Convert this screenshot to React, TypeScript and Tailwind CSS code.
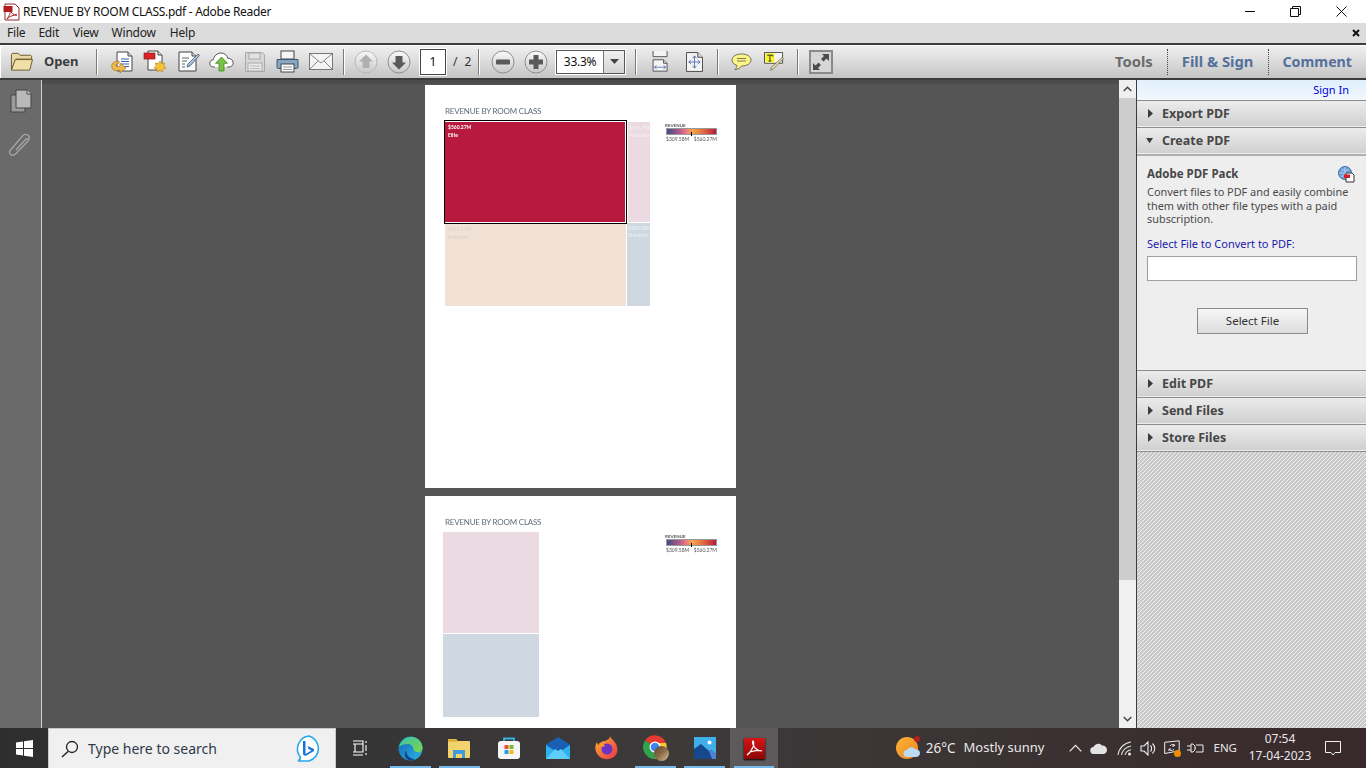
import React from "react";

const FONT = "font-['Noto_Sans','Open_Sans',sans-serif]";

function TbSep() {
  return <div className="w-[2px] h-[26px] bg-[#7a7a7a] border-r border-white" />;
}

function Slot({ w = "w-[33px]", children }: { w?: string; children: React.ReactNode }) {
  return <div className={`${w} h-[24px] flex items-center justify-center shrink-0`}>{children}</div>;
}

const PdfMini = () => (
  <svg width="18" height="18" viewBox="0 0 18 18">
    <path d="M2 1h10l4 4v12H2z" fill="#fff" stroke="#8a2a2a" />
    <rect x="0.5" y="3" width="9" height="6" fill="#b51d1d" />
    <path d="M4 16c2-3 4-6 3-9 1 3 3 5 7 5-4 0-7 1-10 4z" fill="none" stroke="#b51d1d" />
  </svg>
);

const Folder = () => (
  <svg width="25" height="21" viewBox="0 0 25 21">
    <path d="M1.5 19V3.5l1-1.5h6l2 2h11l1 1v3H6z" fill="#e9d9a4" stroke="#6b5a30" />
    <path d="M1.5 19.5h19l3-11h-18z" fill="#f0dfa6" stroke="#6b5a30" />
  </svg>
);

const DocArrow = () => (
  <svg width="24" height="24" viewBox="0 0 24 24">
    <path d="M7 2h11l4 4v15H7z" fill="#fff" stroke="#444" />
    <path d="M18 2v4h4" fill="#ddd" stroke="#444" />
    <path d="M11 9h8M11 11.5h8M11 14h8M11 16.5h8" stroke="#3560b0" />
    <path d="M9 11c-6 0-8 3-7 7 1 3 5 3 8 2v3l6-5-6-5v3c-2 1-4 1-4-1 0-1 1-2 3-2z" fill="#efb94d" stroke="#a9741d" strokeWidth=".7" />
  </svg>
);

const DocStar = () => (
  <svg width="24" height="25" viewBox="0 0 24 25">
    <path d="M5 2h10l4 4v15H5z" fill="#fff" stroke="#444" />
    <path d="M15 2v4h4" fill="#ddd" stroke="#444" />
    <rect x="1" y="4" width="11" height="6" fill="#d8242a" stroke="#8d1518" strokeWidth=".7" />
    <path d="M17 12l1.6 2.6 3-.6-.7 3 2.1 2-2.9 1-.6 3-2.5-1.7-2.6 1.7-.5-3-2.9-1 2.1-2-.7-3 3 .6z" fill="#f5c23b" stroke="#b67d12" strokeWidth=".6" />
  </svg>
);

const DocPen = () => (
  <svg width="23" height="23" viewBox="0 0 23 23">
    <path d="M2 2h13l4 4v15H2z" fill="#fbfbfb" stroke="#444" />
    <path d="M15 2v4h4" fill="#ddd" stroke="#444" />
    <path d="M5 8h7M5 11h5M5 14h3M5 17h3" stroke="#666" />
    <path d="M21 4l1.500 1.500L13 16l-3 1 1-3z" fill="#a9c0de" stroke="#44546c" strokeWidth=".8" />
  </svg>
);

const CloudUp = () => (
  <svg width="25" height="20" viewBox="0 0 25 20">
    <path d="M6 15H4.500C2 15 .8 13 .8 11.300c0-2 1.500-3.500 3.500-3.500C5 4 8 1 12 1c3.500 0 6 2.300 6.800 5.300 2.800 0 5.400 1.700 5.400 4.700 0 2.400-2 4-4.200 4H18" fill="#fff" stroke="#555" />
    <path d="M12.500 5l6 6.300h-3.500V19H10v-7.700H6.500z" fill="#7cc146" stroke="#3f8a1f" strokeWidth=".8" />
  </svg>
);

const Save = () => (
  <svg width="20" height="20" viewBox="0 0 20 20">
    <path d="M.5.500h17l2 2v17H.5z" fill="#d7d7d7" stroke="#a8a8a8" />
    <rect x="4" y="1" width="11" height="6" fill="#e3e3e3" stroke="#aaa" />
    <rect x="3" y="11" width="14" height="8" fill="#e9e9e9" stroke="#aaa" />
    <path d="M5 14h10M5 16.500h10" stroke="#bbb" />
  </svg>
);

const Printer = () => (
  <svg width="23" height="23" viewBox="0 0 23 23">
    <rect x="5" y="1" width="13" height="8" fill="#f6f6f6" stroke="#444" />
    <path d="M1 9.500h21v7.500a1.500 1.500 0 0 1-1.500 1.500h-18A1.500 1.500 0 0 1 1 17z" fill="#86a7c4" stroke="#40566a" />
    <rect x="5" y="14" width="13" height="8" fill="#fbfbfb" stroke="#444" />
    <path d="M7 17h9M7 19.500h9" stroke="#999" />
  </svg>
);

const Mail = () => (
  <svg width="24" height="17" viewBox="0 0 24 17">
    <rect x=".5" y=".5" width="23" height="16" fill="#f4f4f4" stroke="#777" />
    <path d="M1 1l11 9 11-9M1 16l8-8M23 16l-8-8" fill="none" stroke="#888" />
  </svg>
);

const RoundBtn = ({ kind }: { kind: "up" | "down" | "minus" | "plus" }) => {
  const dim = kind === "up";
  const color = dim ? "#b0b0b0" : "#5a5a5a";
  return (
    <svg width="24" height="24" viewBox="0 0 24 24">
      <defs>
        <linearGradient id={`rb-${kind}`} x1="0" y1="0" x2="0" y2="1">
          <stop offset="0" stopColor="#fafafa" />
          <stop offset="1" stopColor="#c8c8c8" />
        </linearGradient>
      </defs>
      <circle cx="12" cy="12" r="11" fill={`url(#rb-${kind})`} stroke={dim ? "#b8b8b8" : "#8f8f8f"} />
      {kind === "up" && <path d="M12 4.500l7 7h-3.500v6.500h-7v-6.500H5z" fill={color} />}
      {kind === "down" && <path d="M12 19.500l7-7h-3.500V6h-7v6.500H5z" fill={color} />}
      {kind === "minus" && <rect x="5" y="9.500" width="14" height="5" rx="1" fill={color} />}
      {kind === "plus" && <path d="M9.500 5h5v4.500H19v5h-4.500V19h-5v-4.500H5v-5h4.500z" fill={color} />}
    </svg>
  );
};

const FitWidth = () => (
  <svg width="17" height="21" viewBox="0 0 18 24">
    <path d="M.5 0v6.500h16V0" fill="#f4f4f4" stroke="#444" />
    <path d="M.5 23v-13h12l4 4v9z" fill="#f4f4f4" stroke="#444" />
    <path d="M12.500 10v4h4" fill="#ddd" stroke="#444" />
    <path d="M2 18.500h13M2 18.500l2.500-2M2 18.500l2.500 2M15 18.500l-2.500-2M15 18.500l-2.500 2" stroke="#5a76b6" fill="none" />
  </svg>
);

const FitPage = () => (
  <svg width="17" height="20" viewBox="0 0 18 21">
    <path d="M.5.500h12l5 5v15H.5z" fill="#f4f4f4" stroke="#444" />
    <path d="M12.500.500v5h5" fill="#ddd" stroke="#444" />
    <path d="M9 4v13M3 10.500h12M9 4L7 6.500M9 4l2 2.500M9 17l-2-2.500M9 17l2-2.500M3 10.500l2.500-2M3 10.500l2.500 2M15 10.500l-2.500-2M15 10.500l-2.500 2" stroke="#5a76b6" fill="none" />
  </svg>
);

const Bubble = () => (
  <svg width="21" height="18" viewBox="0 0 21 18">
    <path d="M10.500 1C5 1 1 3.500 1 7c0 2.500 2 4.500 5 5.500 0 1.500-1 3-2 4 3 0 5-1.500 6.500-3.500 5.500 0 9.500-2.500 9.500-6 0-3.500-4-6-9.500-6z" fill="#fbf58a" stroke="#6e6e52" />
    <path d="M6 5.500h9M6 8h9" stroke="#7a7a50" />
  </svg>
);

const TextNote = () => (
  <svg width="20" height="19" viewBox="0 0 22 21">
    <path d="M.5.500h20v12H.5z" fill="#f4f4f4" stroke="#444" />
    <rect x="1.500" y="1.500" width="10" height="10" fill="#f7f22a" />
    <path d="M3.500 3.500h6v1.500M6.500 3.500v6.500M5 10h3" stroke="#222" fill="none" />
    <path d="M20 6l1.500 1.500L10 19l-3 1.200L8 17z" fill="#e8d79a" stroke="#666" strokeWidth=".8" />
  </svg>
);

const Expand = () => (
  <div className="w-[24px] h-[24px] border-2 border-[#8a8a8a] bg-[#d6d6d6] flex items-center justify-center">
    <svg width="18" height="18" viewBox="0 0 18 18">
      <path d="M10 1h7v7l-2.500-2.500-3 3-2.500-2.500 3-3zM8 17H1v-7l2.500 2.500 3-3 2.500 2.500-3 3z" fill="#4d4d4d" />
    </svg>
  </div>
);

function PanelHeader({ label, open = false }: { label: string; open?: boolean }) {
  return (
    <div className="h-[26px] mb-px flex items-center bg-gradient-to-b from-[#ececec] to-[#d0d0d0] border-t border-[#8c8c8c] shrink-0">
      <div className="w-[25px] flex justify-end pr-[8px]">
        {open ? (
          <svg width="8" height="6" viewBox="0 0 9 7"><path d="M0 0h8L4 6z" fill="#3b3b3b" /></svg>
        ) : (
          <svg width="7" height="9" viewBox="0 0 7 9"><path d="M1 0l5 4.500L1 9z" fill="#3b3b3b" /></svg>
        )}
      </div>
      <span className="pt-[2px] text-[12.500px] font-bold text-[#474747]">{label}</span>
    </div>
  );
}

function Legend({ mt }: { mt: string }) {
  return (
    <div className={`${mt} w-[52px] shrink-0`}>
      <div className="text-[4.500px] leading-[5px] font-bold text-[#555] h-[5px] blur-[0.2px]">REVENUE</div>
      <div className="relative h-[7px] w-[51px] ml-px border border-[#999] bg-[linear-gradient(90deg,#3e4d86,#b05a8c_25%,#f27a80_40%,#f4a84c_52%,#e0683f_75%,#b6193f)]">
        <div className="absolute left-[24px] top-[3px] h-[4px] w-px bg-black" />
      </div>
      <div className="flex justify-between ml-px w-[51px] text-[5px] leading-[7px] mt-[1px] text-[#555] blur-[0.2px]">
        <span>$309.58M</span>
        <span>$560.27M</span>
      </div>
    </div>
  );
}

function Page1() {
  return (
    <div className="w-[311px] h-[403px] bg-white shrink-0 px-[20px] pt-[21px] font-['Lato','Liberation_Sans',sans-serif]">
      <div className="text-[8px] leading-[10px] tracking-[-0.22px] text-[#5f6b78] h-[15px] whitespace-nowrap blur-[0.2px]">REVENUE BY ROOM CLASS</div>
      <div className="flex">
        <div className="w-[205px] h-[185px] flex shrink-0">
          <div className="w-[181px] flex flex-col shrink-0">
            <div className="h-[102px] mb-px outline outline-1 outline-black border-y border-r border-white bg-[#b7193f] text-white text-[5px] leading-[7.500px] font-bold pl-[3px] pt-[2px]">
              <div className="blur-[0.2px]">$560.27M</div>
              <div className="blur-[0.2px]">Elite</div>
            </div>
            <div className="flex-1 bg-[#f2e1d5] text-[#d9d2cb] text-[5px] leading-[7.500px] pl-[3px] pt-[2px]">
              <div className="blur-[0.2px]">$462.17M</div>
              <div className="blur-[0.2px]">Premium</div>
            </div>
          </div>
          <div className="flex-1 flex flex-col overflow-hidden">
            <div className="h-[100px] mt-px ml-[2px] bg-[#ebdae2] text-[#f7eff3] text-[5px] leading-[7px] pl-px pt-[3px] whitespace-nowrap">
              <div className="blur-[0.2px]">$376.75M</div>
              <div className="blur-[0.2px]">Presidential</div>
            </div>
            <div className="flex-1 ml-px bg-[#cfd8e0] text-[#eef1f4] text-[5px] leading-[7px] pl-px pt-[2px] whitespace-nowrap border-t border-white">
              <div className="blur-[0.2px]">$309.58M</div>
              <div className="blur-[0.2px]">Standard</div>
            </div>
          </div>
        </div>
        <Legend mt="mt-[2px] ml-[15px]" />
      </div>
    </div>
  );
}

function Page2() {
  return (
    <div className="w-[311px] h-[403px] bg-white shrink-0 pl-[18px] pt-[21px] font-['Lato','Liberation_Sans',sans-serif]">
      <div className="text-[8px] leading-[10px] tracking-[-0.22px] text-[#5f6b78] h-[15px] pl-[2px] whitespace-nowrap blur-[0.2px]">REVENUE BY ROOM CLASS</div>
      <div className="flex">
        <div className="w-[96px] flex flex-col shrink-0">
          <div className="h-[101px] bg-[#ebdae2]" />
          <div className="h-[83px] mt-px bg-[#cfd8e0]" />
        </div>
        <Legend mt="mt-[2px] ml-[126px]" />
      </div>
    </div>
  );
}

const Grad = ({ id, stops }: { id: string; stops: [string, string][] }) => (
  <linearGradient id={id} x1="0" y1="0" x2="1" y2="1">
    {stops.map(([o, c]) => <stop key={o} offset={o} stopColor={c} />)}
  </linearGradient>
);

function TbItem({ active = false, on = false, w = "w-[49px]", className = "", children }: { active?: boolean; on?: boolean; w?: string; className?: string; children: React.ReactNode }) {
  return (
    <div className={`${w} ${className} h-full relative flex items-center justify-center shrink-0 ${active ? "bg-[#5e595a]" : ""}`}>
      {children}
      {on && <div className="absolute bottom-0 left-[4px] right-[4px] h-[2px] bg-[#76b9ed]" />}
    </div>
  );
}

export default function App() {
  return (
    <div className={`w-[1366px] h-[768px] overflow-hidden flex flex-col bg-white ${FONT}`}>
      {/* Title bar */}
      <div className="h-[23px] shrink-0 flex items-center bg-white">
        <div className="ml-[2px] w-[19px] flex justify-center"><PdfMini /></div>
        <span className="ml-[2px] text-[12px] tracking-[-0.3px] text-[#111] whitespace-nowrap">REVENUE BY ROOM CLASS.pdf - Adobe Reader</span>
        <div className="ml-auto mr-[2px] flex items-center h-full">
          <div className="w-[45px] flex justify-center"><div className="w-[10px] h-px bg-black" /></div>
          <div className="w-[46px] flex justify-center">
            <svg width="11" height="11" viewBox="0 0 11 11"><path d="M.5 2.500h8v8h-8zM2.500 2.500v-2h8v8h-2" fill="none" stroke="#111" /></svg>
          </div>
          <div className="w-[46px] flex justify-center">
            <svg width="11" height="11" viewBox="0 0 11 11"><path d="M.5.500l10 10M10.500.500l-10 10" stroke="#111" /></svg>
          </div>
        </div>
      </div>

      {/* Menu bar */}
      <div className="h-[20px] shrink-0 bg-[#dcdcdc] flex items-center text-[12px] tracking-[-0.2px] text-[#222]">
        <span className="ml-[7px]">File</span>
        <span className="ml-[13px]">Edit</span>
        <span className="ml-[14px]">View</span>
        <span className="ml-[13px]">Window</span>
        <span className="ml-[14px]">Help</span>
        <svg className="ml-auto mr-[6px]" width="8" height="8" viewBox="0 0 8 8"><path d="M1 1l6 6M7 1L1 7" stroke="#111" strokeWidth="2" /></svg>
      </div>

      {/* Toolbar */}
      <div className="h-[37px] shrink-0 border-y-2 border-y-[#3c3c3c] bg-gradient-to-b from-[#f0f0f0] via-[#dcdcdc] to-[#c4c4c4] flex items-center shadow-[inset_1px_1px_0_#fff]">
        <div className="ml-[10px]"><Slot w="w-[24px]"><Folder /></Slot></div>
        <span className="ml-[10px] w-[33px] text-[13px] tracking-[-0.1px] font-bold text-[#3d3d3d]">Open</span>
        <div className="ml-[19px]"><TbSep /></div>
        <div className="ml-[7px] flex">
          <Slot><DocArrow /></Slot>
          <Slot w="w-[34px]"><DocStar /></Slot>
          <Slot><DocPen /></Slot>
          <Slot><CloudUp /></Slot>
          <Slot><Save /></Slot>
          <Slot><Printer /></Slot>
          <Slot><Mail /></Slot>
        </div>
        <div className="ml-[6px]"><TbSep /></div>
        <div className="ml-[4px] flex">
          <Slot><RoundBtn kind="up" /></Slot>
          <Slot><RoundBtn kind="down" /></Slot>
        </div>
        <div className="ml-[5px] w-[26px] h-[26px] border border-[#444] bg-white outline outline-white flex items-center justify-center text-[12px] text-[#111]">1</div>
        <span className="ml-[7px] w-[25px] text-[12px] text-[#333] tracking-[2px] whitespace-pre">/ 2</span>
        <TbSep />
        <div className="ml-[6px] flex">
          <Slot><RoundBtn kind="minus" /></Slot>
          <Slot><RoundBtn kind="plus" /></Slot>
        </div>
        <div className="ml-[3px] w-[71px] h-[26px] border border-white flex bg-white">
          <div className="w-[48px] border border-[#555] border-r-[#777] flex items-center justify-center text-[12px] tracking-[-0.3px] text-[#111]">33.3%</div>
          <div className="flex-1 bg-gradient-to-b from-[#f0f0f0] to-[#d4d4d4] border-y border-r border-[#555] flex items-center justify-center">
            <svg width="9" height="5" viewBox="0 0 9 5"><path d="M0 0h9L4.500 5z" fill="#444" /></svg>
          </div>
        </div>
        <div className="ml-[9px]"><TbSep /></div>
        <div className="ml-[7px] flex">
          <Slot><FitWidth /></Slot>
          <Slot w="w-[34px]"><FitPage /></Slot>
        </div>
        <div className="ml-[6px]"><TbSep /></div>
        <div className="ml-[6px] flex">
          <Slot><Bubble /></Slot>
          <Slot w="w-[31px]"><TextNote /></Slot>
        </div>
        <div className="ml-[8px]"><TbSep /></div>
        <div className="ml-[10px]"><Expand /></div>
        <div className="ml-auto flex items-center h-full font-bold text-[14.800px]">
          <span className="text-[#6b6b6b]">Tools</span>
          <div className="mx-[14px] h-[26px] border-l border-dotted border-[#444]" />
          <span className="text-[#54709a]">Fill &amp; Sign</span>
          <div className="mx-[14px] h-[26px] border-l border-dotted border-[#444]" />
          <span className="text-[#54709a] text-[14.200px] mr-[14px]">Comment</span>
        </div>
      </div>

      {/* Main */}
      <div className="flex-1 min-h-0 flex">
        <div className="w-[41px] shrink-0 bg-[#6a6a6a] flex flex-col items-center pt-[9px] gap-[20px]">
          <svg width="22" height="24" viewBox="0 0 22 24">
            <path d="M1 6h14v17H1z" fill="#9b9b9b" stroke="#444" />
            <path d="M6 1h11l4 4v14H6z" fill="#b9b9b9" stroke="#444" />
            <path d="M17 1v4h4" fill="#e0e0e0" stroke="#444" />
          </svg>
          <svg className="mr-[3px]" width="22" height="24" viewBox="0 0 22 24">
            <path d="M8 17L17.500 6.500C19.500 4.500 21 6.500 19.500 8.500L7.500 21C4 24 -.5 20.500 2.500 17L14.500 3C18 -.5 23 2.500 20.500 7" fill="none" stroke="#a6a6a6" strokeWidth="1.300" />
          </svg>
        </div>
        <div className="w-[1px] bg-[#cfcfcf] shrink-0" />
        <div className="flex-1 min-w-0 bg-[#555555] shadow-[inset_0_4px_0_#4c4c4c] overflow-hidden flex flex-col items-center pt-[5px] gap-[8px]">
          <Page1 />
          <Page2 />
        </div>

        {/* Scrollbar */}
        <div className="w-[17px] shrink-0 flex flex-col bg-[#f0f0f0]">
          <div className="h-[18px] flex items-center justify-center">
            <svg width="9" height="6" viewBox="0 0 9 6"><path d="M.7 5l3.800-3.800L8.300 5" fill="none" stroke="#444" strokeWidth="1.500" /></svg>
          </div>
          <div className="h-[482px] bg-[#cdcdcd]" />
          <div className="flex-1" />
          <div className="h-[18px] flex items-center justify-center">
            <svg width="9" height="6" viewBox="0 0 9 6"><path d="M.7 1l3.800 3.800L8.300 1" fill="none" stroke="#444" strokeWidth="1.500" /></svg>
          </div>
        </div>

        {/* Right panel */}
        <div className="w-[230px] shrink-0 border-l border-[#3c3c3c] flex flex-col bg-[#eeeeee]">
          <div className="h-[20px] shrink-0 bg-gradient-to-b from-[#e0effc] to-[#f2f8fd] flex items-center justify-end pr-[17px] text-[11px] text-[#0000e6]">Sign In</div>
          <PanelHeader label="Export PDF" />
          <PanelHeader label="Create PDF" open />
          <div className="h-[216px] shrink-0 bg-[#eeeeee] border-t-2 border-[#b0b0b0] px-[10px] pt-[10px] text-[#444]">
            <div className="flex items-center justify-between h-[16px]">
              <span className="text-[11.500px] font-bold text-[#474747]">Adobe PDF Pack</span>
              <svg className="mr-px" width="17" height="17" viewBox="0 0 17 17">
                <circle cx="7" cy="7" r="6.500" fill="#6d9fdc" stroke="#3e6da8" />
                <path d="M1 7h12M7 1v12M3 3c2 2 6 2 8 0M3 11c2-2 6-2 8 0" stroke="#cfe0f5" fill="none" strokeWidth=".7" />
                <path d="M8 7h6l2 2v7H8z" fill="#fff" stroke="#333" />
                <rect x="6" y="8.500" width="6" height="3.500" fill="#d3202a" />
              </svg>
            </div>
            <div className="mt-[3px] text-[10.900px] leading-[13.500px] text-[#4a4a4a]">
              Convert files to PDF and easily combine<br />them with other file types with a paid<br />subscription.
            </div>
            <div className="mt-[11px] text-[11px] leading-[14px] text-[#1a1ab0]">Select File to Convert to PDF:</div>
            <div className="mt-[5px] w-[210px] h-[25px] bg-white border border-[#a0a0a0]" />
            <div className="mt-[27px] ml-[50px] w-[111px] h-[26px] border border-[#8a8a8a] bg-gradient-to-b from-[#f6f6f6] to-[#dcdcdc] flex items-center justify-center text-[11.500px] text-[#333]">Select File</div>
          </div>
          <PanelHeader label="Edit PDF" />
          <PanelHeader label="Send Files" />
          <PanelHeader label="Store Files" />
          <div className="flex-1 border-t border-[#8c8c8c] bg-[repeating-linear-gradient(135deg,#c9c9c9_0,#c9c9c9_1.800px,#f0f0f0_1.800px,#f0f0f0_2.828px)]" />
        </div>
      </div>

      {/* Taskbar */}
      <div className="h-[40px] shrink-0 flex items-center bg-gradient-to-r from-[#2e2e2e] via-[#3d3a3a] to-[#38292c] text-white">
        <div className="w-[48px] h-full flex items-center justify-center">
          <svg width="17" height="17" viewBox="0 0 17 17"><path d="M0 2.400l7-1V8H0zM8 1.200L17 0v8H8zM0 9h7v6.600l-7-1zM8 9h9v8l-9-1.200z" fill="#fff" /></svg>
        </div>
        <div className="w-[288px] h-full bg-[#f0f0f0] border-t border-[#c8c8c8] border-x flex items-center pl-[12px] text-[#333]">
          <svg width="18" height="18" viewBox="0 0 18 18"><circle cx="11" cy="7" r="5.500" fill="none" stroke="#222" strokeWidth="1.300" /><path d="M7 11.500L1 17" stroke="#222" strokeWidth="1.500" /></svg>
          <span className="ml-[9px] text-[14px] text-[#2f3a48] whitespace-nowrap">Type here to search</span>
          <svg className="ml-auto mr-[11px]" width="30" height="30" viewBox="0 0 30 30">
            <path d="M15 2a13 13 0 0 1 0 25H4c2-1 2.500-2.500 2.300-4A13 13 0 0 1 15 2z" fill="#fff" stroke="#2aa7ea" strokeWidth="1.600" />
            <path d="M11.500 7v13l6-3.500-3-1.500-1-3 6.500 3v2l-8.500 5-2.500-1.500V7z" fill="#1b72d8" />
          </svg>
        </div>
        <div className="ml-[1px] flex h-full items-center">
          <TbItem>
            <svg className="mr-[4px]" width="16" height="16" viewBox="0 0 16 16">
              <path d="M1 1h10v3M1 4h10M1 12h10M1 15h10M3 4v8h8V4M14 1v2M14 5v6M14 13v2" fill="none" stroke="#fff" strokeWidth="1.100" />
            </svg>
          </TbItem>
          <TbItem on>
            <svg width="25" height="25" viewBox="0 0 25 25">
              <defs>
                <Grad id="edgeA" stops={[["0", "#36c4a8"], ["1", "#7fd34a"]]} />
                <Grad id="edgeB" stops={[["0", "#1464b4"], ["1", "#2bb6e6"]]} />
              </defs>
              <circle cx="12.500" cy="12.500" r="12" fill="url(#edgeB)" />
              <path d="M1 11C3 3 10 0 15 1c6 1 9.500 6 9.500 11 0 3-3 5-6 4-2-.5-3-1.500-3-3 0-3-3-5-6-5s-6.500 1-8.500 3z" fill="url(#edgeA)" />
              <path d="M8 14c0 5 4 9 9 9l-2.500 1.500c-6 1-10-5-6.500-10.500z" fill="#0c4a8c" />
            </svg>
          </TbItem>
          <TbItem on>
            <svg className="mr-[2px]" width="22" height="21" viewBox="0 0 22 21">
              <path d="M0 2a1 1 0 0 1 1-1h7l2 2h11a1 1 0 0 1 1 1v15a1 1 0 0 1-1 1H1a1 1 0 0 1-1-1z" fill="#f3d46c" />
              <path d="M0 1.500h8l2 2H0z" fill="#dda52a" />
              <path d="M5 12h12v8h-3v-4H8v4H5z" fill="#3d9be0" />
            </svg>
          </TbItem>
          <TbItem>
            <svg width="24" height="24" viewBox="0 0 24 24">
              <path d="M7 6V2.500h10V6" fill="none" stroke="#36b4e6" strokeWidth="1.800" />
              <rect x="1" y="5" width="22" height="18" rx="3" fill="#f5f5f5" />
              <rect x="7.500" y="9" width="4" height="4" fill="#e8512a" />
              <rect x="12.500" y="9" width="4" height="4" fill="#7ab929" />
              <rect x="7.500" y="14" width="4" height="4" fill="#1f9fe6" />
              <rect x="12.500" y="14" width="4" height="4" fill="#f7b917" />
            </svg>
          </TbItem>
          <TbItem>
            <svg width="24" height="23" viewBox="0 0 24 23">
              <path d="M0 7.500L12 0l12 7.500V22H0z" fill="#1a5fb4" />
              <path d="M0 8l12 8 12-8v14H0z" fill="#2eb2ee" />
              <path d="M0 22l9-10 3 2 3-2 9 10z" fill="#5fcdf7" />
            </svg>
          </TbItem>
          <TbItem>
            <svg width="23" height="24" viewBox="0 0 23 24">
              <defs><Grad id="ff" stops={[["0", "#ffb52c"], ["1", "#e8324c"]]} /></defs>
              <path d="M15 0c1 3 4 4 6 8 2 4 2 9-1 12-4 4-11 4-15 1C0 17-1 11 2 6c0 2 1 3 2 3 1-3 3-4 6-4 2-1 5-2 5-5z" fill="url(#ff)" />
              <circle cx="12" cy="13" r="5.500" fill="#6a35c4" />
              <path d="M3 8c3-1 6 0 7 2-2 1-3 1-4 0z" fill="#ff9a2c" />
            </svg>
          </TbItem>
          <TbItem on>
            <div className="relative w-[26px] h-[26px]">
              <svg width="24" height="24" viewBox="0 0 24 24">
                <path d="M12 12L2 5.500A12 12 0 0 1 23 8H12z" fill="#e53a32" />
                <path d="M12 12l6 3.500L12 24A12 12 0 0 1 2 5.500z" fill="#2ea24d" />
                <path d="M12 8h11A12 12 0 0 1 12 24l6-8.500z" fill="#fcc934" />
                <circle cx="12" cy="12" r="5.500" fill="#fff" />
                <circle cx="12" cy="12" r="4.300" fill="#3f84ee" />
              </svg>
              <div className="absolute right-0 bottom-0 w-[15px] h-[15px] rounded-full bg-gradient-to-br from-[#5c4632] via-[#8c6b48] to-[#d8c49c]" />
            </div>
          </TbItem>
          <TbItem on>
            <svg width="22" height="22" viewBox="0 0 22 22">
              <rect width="22" height="22" fill="#3fb0ea" />
              <circle cx="15.500" cy="5.500" r="2" fill="#fff" />
              <path d="M0 22V12l7-5 8 7 2-1 5 4v5z" fill="#17488c" />
              <path d="M15 14l2-1 5 4v5h-4z" fill="#4e80d6" />
            </svg>
          </TbItem>
          <TbItem active on w="w-[48px]" className="ml-px">
            <div className="w-[21px] h-[21px] bg-gradient-to-b from-[#d81416] to-[#8e0606] flex items-center justify-center shadow-[0_1px_2px_#000]">
              <svg width="17" height="16" viewBox="0 0 17 16">
                <path d="M1 15c2-1 4-4 6-8 1-2 1-5 0-6-1 1 0 4 2 7 2 2 5 3 7 3-3-1-9 0-12 1-1 1-2 2-3 3z" fill="none" stroke="#fff" strokeWidth="1.200" />
              </svg>
            </div>
          </TbItem>
        </div>
        <div className="ml-auto flex items-center h-full text-[#e8e8e8]">
          <div className="relative w-[24px] h-[24px]">
            <div className="w-[22px] h-[22px] mt-[1px] rounded-full bg-gradient-to-br from-[#fbb53a] to-[#ee8418]" />
            <svg className="absolute left-[7px] top-[10px]" width="17" height="11" viewBox="0 0 17 11"><path d="M4 11a3.500 3.500 0 0 1 0-7c1-3 6-4 8-1 3 0 5 2 5 4s-1.500 4-4 4z" fill="#bcd9f2" /></svg>
            <div className="absolute right-0 top-0 w-[6px] h-[6px] rounded-full bg-[#b71f1f]" />
          </div>
          <span className="ml-[6px] text-[13.500px] whitespace-nowrap">26°C</span>
          <span className="ml-[8px] text-[13px] whitespace-nowrap">Mostly sunny</span>
          <svg className="ml-[25px]" width="13" height="8" viewBox="0 0 13 8"><path d="M.7 7.300l5.800-6 5.800 6" fill="none" stroke="#eee" strokeWidth="1.200" /></svg>
          <svg className="ml-[8px]" width="17" height="11" viewBox="0 0 17 11"><path d="M4 11a3.500 3.500 0 0 1-.5-7c1-3 6-5 8.500-1.500 3 0 5 2 5 4.500S15 11 13 11z" fill="#e3e3e3" /></svg>
          <svg className="ml-[10px]" width="15" height="15" viewBox="0 0 15 15">
            <path d="M1 14C2 7 7 2 14 1M4.500 14c.8-4.500 4-7.700 9.500-9M8 14c.5-2.500 2.500-4.500 6-5.300" fill="none" stroke="#ddd" strokeWidth="1.100" />
            <circle cx="12.500" cy="13" r="1.500" fill="#eee" />
          </svg>
          <svg className="ml-[8px]" width="16" height="15" viewBox="0 0 16 15">
            <path d="M1 5h3l4-4v13l-4-4H1zM10.500 4.500c1.500 1.500 1.500 4.500 0 6M12.500 2.500c3 3 3 7 0 10" fill="none" stroke="#eee" strokeWidth="1.100" />
          </svg>
          <div className="relative ml-[8px] w-[17px] h-[17px]">
            <svg width="16" height="15" viewBox="0 0 16 15">
              <path d="M.7 2.300l14.500-1.500v10L.7 13.500zM5 9c1 2 4 2 5 0M11 6C10 4 7 4 6 6M10 4v2h-2M5 11V9h2" fill="none" stroke="#eee" />
            </svg>
            <div className="absolute right-0 bottom-0 w-[7px] h-[7px] rounded-full bg-[#f08c00]" />
          </div>
          <svg className="ml-[6px]" width="17" height="11" viewBox="0 0 17 11">
            <path d="M0 3h4M0 7h4M4 1v8h2l2-2V3L6 1zM8 5h1M9 2h7v7H9" fill="none" stroke="#eee" />
          </svg>
          <span className="ml-[9px] text-[11.500px] whitespace-nowrap">ENG</span>
          <div className="ml-[14px] w-[58px] flex flex-col items-center text-[12px] leading-[17px] -mt-[2px]">
            <span>07:54</span>
            <span className="whitespace-nowrap">17-04-2023</span>
          </div>
          <div className="ml-[16px] mr-[25px] w-[16px] flex justify-center">
            <svg width="16" height="15" viewBox="0 0 16 15"><path d="M.5.500h15v11H10l-2 2.500-2-2.500H.5z" fill="none" stroke="#eee" /></svg>
          </div>
        </div>
      </div>
    </div>
  );
}
